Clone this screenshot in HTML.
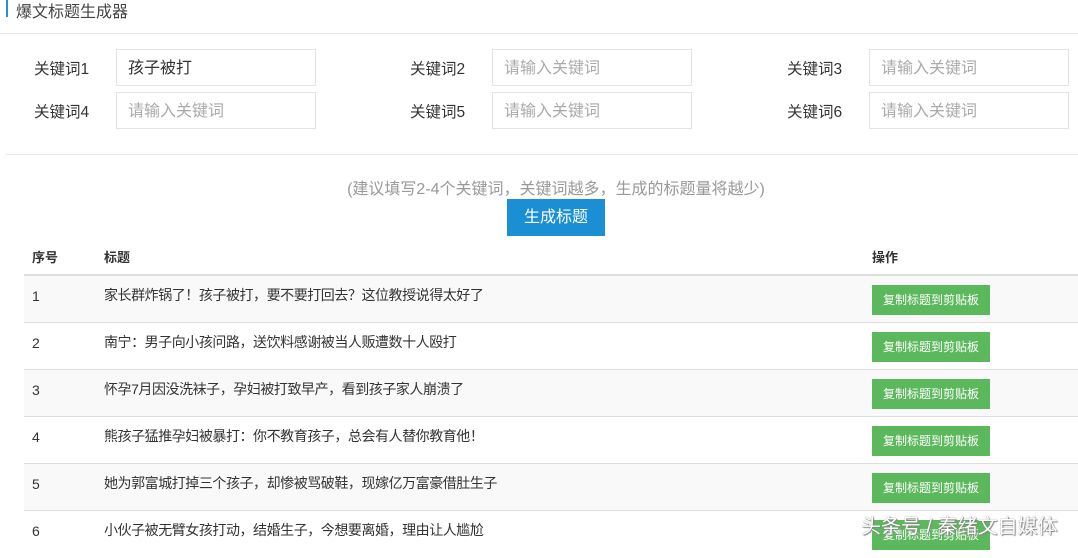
<!DOCTYPE html>
<html><head><meta charset="utf-8"><style>
*{margin:0;padding:0;box-sizing:border-box}
body{width:1078px;height:545px;overflow:hidden;background:#fff;font-family:"Liberation Sans","Noto Sans CJK SC",sans-serif;color:#333;position:relative}
.a{position:absolute;white-space:nowrap}
.lbl{font-size:15.5px;color:#333}
.inp{width:200px;height:37px;border:1px solid #e3e3e3;font-size:16px;padding:0 11px;color:#aaa;line-height:37px}
.row{position:absolute;left:24px;width:1054px;height:47px;border-bottom:1px solid #ddd}
.row .n{position:absolute;left:8px;top:12px;font-size:14px;color:#333}
.row .t{position:absolute;left:80px;top:9px;font-size:14px;letter-spacing:-0.45px;color:#333}
.row .b{position:absolute;left:848px;top:9px;width:118px;height:30px;background:#5cb85c;color:#fff;font-size:12px;text-align:center;line-height:30px}
.g{background:#f9f9f9}
</style></head><body>
<div class="a" style="left:6px;top:0;width:2px;height:17px;background:#2a8fd6"></div>
<div class="a" style="left:16px;top:-2px;font-size:16px;color:#444">爆文标题生成器</div>
<div class="a" style="left:0;top:33px;width:1078px;height:1px;background:#e8e8e8"></div>

<div class="a lbl" style="left:34px;top:57px">关键词1</div>
<div class="a inp" style="left:116px;top:49px;color:#333">孩子被打</div>
<div class="a lbl" style="left:410px;top:57px">关键词2</div>
<div class="a inp" style="left:492px;top:49px">请输入关键词</div>
<div class="a lbl" style="left:787px;top:57px">关键词3</div>
<div class="a inp" style="left:869px;top:49px">请输入关键词</div>
<div class="a lbl" style="left:34px;top:100px">关键词4</div>
<div class="a inp" style="left:116px;top:92px">请输入关键词</div>
<div class="a lbl" style="left:410px;top:100px">关键词5</div>
<div class="a inp" style="left:492px;top:92px">请输入关键词</div>
<div class="a lbl" style="left:787px;top:100px">关键词6</div>
<div class="a inp" style="left:869px;top:92px">请输入关键词</div>

<div class="a" style="left:6px;top:154px;width:1072px;height:1px;background:#e8e8e8"></div>
<div class="a" style="left:0;width:1112px;top:175px;text-align:center;font-size:16px;color:#999">(建议填写2-4个关键词，关键词越多，生成的标题量将越少)</div>
<div class="a" style="left:507px;top:199px;width:98px;height:37px;background:#1a8fd4;color:#fff;font-size:16px;text-align:center;line-height:37px">生成标题</div>

<div class="a" style="left:32px;top:247px;font-size:13px;font-weight:bold;color:#333">序号</div>
<div class="a" style="left:104px;top:247px;font-size:13px;font-weight:bold;color:#333">标题</div>
<div class="a" style="left:872px;top:247px;font-size:13px;font-weight:bold;color:#333">操作</div>
<div class="a" style="left:24px;top:274px;width:1054px;height:2px;background:#ddd"></div>

<div class="row g" style="top:276px"><span class="n">1</span><span class="t">家长群炸锅了！孩子被打，要不要打回去？这位教授说得太好了</span><span class="b">复制标题到剪贴板</span></div>
<div class="row" style="top:323px"><span class="n">2</span><span class="t">南宁：男子向小孩问路，送饮料感谢被当人贩遭数十人殴打</span><span class="b">复制标题到剪贴板</span></div>
<div class="row g" style="top:370px"><span class="n">3</span><span class="t">怀孕7月因没洗袜子，孕妇被打致早产，看到孩子家人崩溃了</span><span class="b">复制标题到剪贴板</span></div>
<div class="row" style="top:417px"><span class="n">4</span><span class="t">熊孩子猛推孕妇被暴打：你不教育孩子，总会有人替你教育他！</span><span class="b">复制标题到剪贴板</span></div>
<div class="row g" style="top:464px"><span class="n">5</span><span class="t">她为郭富城打掉三个孩子，却惨被骂破鞋，现嫁亿万富豪借肚生子</span><span class="b">复制标题到剪贴板</span></div>
<div class="row" style="top:511px;border-bottom:none"><span class="n">6</span><span class="t">小伙子被无臂女孩打动，结婚生子，今想要离婚，理由让人尴尬</span><span class="b">复制标题到剪贴板</span></div>

<div class="a" style="left:861px;top:510px;font-size:20px;color:#fff;text-shadow:0 0 1px #666,1px 1px 1px #888">头条号 / 秦绪文自媒体</div>
</body></html>
